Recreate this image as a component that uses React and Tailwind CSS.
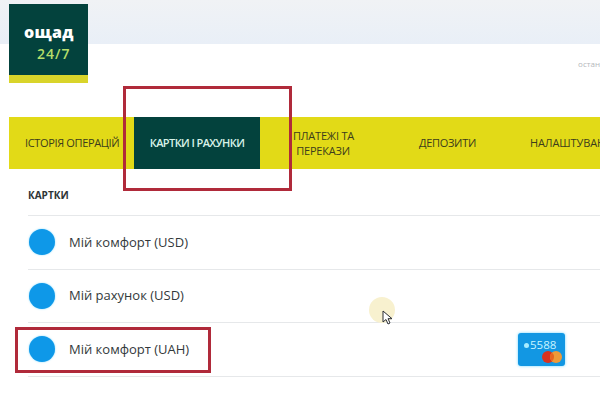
const font = "font-['Open_Sans','Liberation_Sans',sans-serif]";

// Row in the cards list
function CardRow({ name, children }) {
  return (
    <div className="flex h-[53.5px] items-center border-b border-[#e6e8ea] pl-[1px]">
      <span className="h-[26px] w-[26px] shrink-0 rounded-full bg-[#0e98e8] shadow-[0_0_2px_#7fd8ff]" />
      <span className="ml-[14px] text-[13px] text-[#33393b]">{name}</span>
      {children}
    </div>
  );
}

const MiniCard = () => (
  <div className="absolute left-[518px] top-[333px] h-[33px] w-[47px] rounded-[3px] bg-[#1297e3] shadow-[0_0_3px_#6fd4ff]">
    <span className="absolute left-[6px] top-[10px] h-[5px] w-[5px] rounded-full bg-[#a8ecff]" />
    <span className="absolute left-[12px] top-[4px] text-[11.5px] font-medium leading-[16px] text-[#c8f4ff]">5588</span>
    <svg viewBox="0 0 20 12" className="absolute left-[24px] top-[18px] h-[12px] w-[20px]">
      <circle cx="6" cy="6" r="6" fill="#d8321f" />
      <circle cx="14" cy="6" r="6" fill="#ee9a38" />
      <path d="M10 1.5a6 6 0 0 1 0 9a6 6 0 0 1 0-9Z" fill="#e8641f" />
    </svg>
  </div>
);

const Cursor = () => (
  <div className="absolute left-[369px] top-[297px] h-[26px] w-[26px] rounded-full bg-[#f8f1cf]">
    <svg viewBox="0 0 12 16" className="absolute left-[13px] top-[13px] h-[16px] w-[12px]">
      <path d="M1 1v11l3-2.5 2 4.5 2-1-2-4.3h4Z" fill="#fff" stroke="#2a2d33" strokeWidth="1" strokeLinejoin="round" />
    </svg>
  </div>
);

export default function App() {
  return (
    <div className={`relative h-[407px] w-[600px] overflow-hidden bg-white ${font}`}>
      {/* top band */}
      <div className="h-[44px] bg-gradient-to-b from-[#f0f2f5] to-[#e9eff7]" />

      <div className="flex h-[73px] justify-end pt-[14px]">
        <span className="text-[8px] leading-[12px] text-[#b4b7bb]">остан</span>
      </div>

      {/* nav */}
      <nav className="ml-[9px] flex h-[52px] items-center overflow-hidden whitespace-nowrap bg-[#e2da17] text-[11px] text-[#3d3d1c]">
        <div className="w-[125px] shrink-0 pl-[16px] tracking-[-0.35px]">ІСТОРІЯ ОПЕРАЦІЙ</div>
        <div className="flex h-full w-[126px] shrink-0 items-center justify-center bg-[#03423d] font-semibold tracking-[-0.6px] text-[#d8f2e8]">
          КАРТКИ І РАХУНКИ
        </div>
        <div className="w-[93px] shrink-0 pl-[33px] text-center leading-[15px] tracking-[-0.2px]">
          <div className="w-[60px]">ПЛАТЕЖІ ТА</div>
          <div className="w-[60px]">ПЕРЕКАЗИ</div>
        </div>
        <div className="ml-[66px] w-[111px] shrink-0 tracking-[-0.3px]">ДЕПОЗИТИ</div>
        <div className="shrink-0 tracking-[-0.1px]">НАЛАШТУВАННЯ</div>
      </nav>

      {/* cards list */}
      <section className="ml-[28px]">
        <h2 className="flex h-[47px] items-center border-b border-[#e6e8ea] pt-[7px] text-[10px] font-bold text-[#2e3436]">
          КАРТКИ
        </h2>
        <CardRow name="Мій комфорт (USD)" />
        <CardRow name="Мій рахунок (USD)" />
        <CardRow name="Мій комфорт (UAH)" />
      </section>

      {/* logo hangs over the top band */}
      <div className="absolute left-[9px] top-[4px] w-[79px] border-b-[8px] border-[#d9d42a] bg-[#03423d]">
        <div className="h-[71px] pl-[15px] pt-[19px]">
          <div className="text-[16px] font-extrabold leading-[18px] tracking-[0.3px] text-white">ощад</div>
          <div className="mt-[4px] pl-[13px] text-[14px] font-semibold leading-[18px] tracking-[1px] text-[#b5dd6a]">24/7</div>
        </div>
      </div>

      {/* red highlights */}
      <div className="absolute left-[123px] top-[86px] h-[105px] w-[169px] border-[3px] border-[#b02a3a]" />
      <div className="absolute left-[15px] top-[327px] h-[46px] w-[196px] border-[3px] border-[#b02a3a]" />

      <MiniCard />
      <Cursor />
    </div>
  );
}
